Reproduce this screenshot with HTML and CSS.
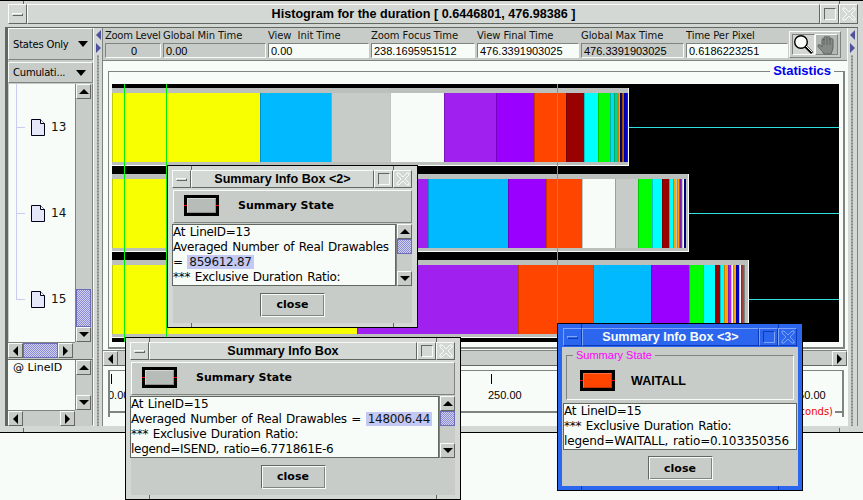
FILE: index.html
```html
<!DOCTYPE html>
<html lang="en">
<head>
<meta charset="utf-8">
<title>Histogram for the duration</title>
<link rel="stylesheet" href="styles.css">
</head>
<body>
<section class="win main">
  <header class="tb main-tb">
    <div class="tb-btn tb-min"><i></i></div>
    <h1 class="tb-title">Histogram for the duration [ 0.6446801, 476.98386 ]</h1>
    <div class="tb-btn tb-max"><i></i></div>
    <div class="tb-btn tb-close"><svg width="14" height="14" viewBox="0 0 14 14"><path d="M1 1h2l4 4 4-4h2v2l-4 4 4 4v2h-2l-4-4-4 4H1v-2l4-4-4-4z" fill="none" stroke="currentColor"/></svg></div>
  </header>
  <div class="client">
    <aside class="left">
      <div class="combo combo-a"><span>States Only</span><i class="tri dn lg"></i></div>
      <div class="combo combo-b"><span>Cumulati...</span><i class="tri dn lg"></i></div>
      <div class="pane pane-tree">
        <div class="tree">
          <div class="tree-row"><i class="twig"></i><svg class="doc" width="14" height="17" viewBox="0 0 14 17"><path d="M.5.5h9l4 4v12H.5z" fill="#e4e8f8" stroke="#000018"/><path d="M9.5.5v4h4" fill="#fff" stroke="#000018"/></svg><span>13</span></div>
          <div class="tree-row"><i class="twig"></i><svg class="doc" width="14" height="17" viewBox="0 0 14 17"><path d="M.5.5h9l4 4v12H.5z" fill="#e4e8f8" stroke="#000018"/><path d="M9.5.5v4h4" fill="#fff" stroke="#000018"/></svg><span>14</span></div>
          <div class="tree-row"><i class="twig"></i><svg class="doc" width="14" height="17" viewBox="0 0 14 17"><path d="M.5.5h9l4 4v12H.5z" fill="#e4e8f8" stroke="#000018"/><path d="M9.5.5v4h4" fill="#fff" stroke="#000018"/></svg><span>15</span></div>
        </div>
        <div class="vsb">
          <div class="sb-btn"><i class="tri up"></i></div>
          <div class="track"></div>
          <div class="thumb thumb-tree"></div>
          <div class="sb-btn"><i class="tri dn"></i></div>
        </div>
        <div class="hsb">
          <div class="sb-btn"><i class="tri lf"></i></div>
          <div class="thumb thumb-h"></div>
          <div class="sb-btn"><i class="tri rt"></i></div>
        </div>
        <div class="corner"></div>
      </div>
      <div class="pane pane-list">
        <div class="list">@ LineID</div>
        <div class="vsb">
          <div class="sb-btn"><i class="tri up"></i></div>
          <div class="track"></div>
          <div class="sb-btn"><i class="tri dn"></i></div>
        </div>
        <div class="hsb">
          <div class="sb-btn"><i class="tri lf"></i></div>
          <div class="track"></div>
          <div class="sb-btn"><i class="tri rt"></i></div>
        </div>
        <div class="corner"></div>
      </div>
    </aside>
    <div class="split"><i class="tri lf blue"></i><i class="tri rt blue"></i><div class="dots"></div></div>
    <main class="center">
      <div class="toolbar">
        <div class="fld f1"><label>Zoom Level</label><output class="ro mid">0</output></div>
        <div class="fld f2"><label>Global Min Time</label><output class="ro">0.00</output></div>
        <div class="fld f3"><label>View&nbsp; Init Time</label><output>0.00</output></div>
        <div class="fld f4"><label>Zoom Focus Time</label><output>238.1695951512</output></div>
        <div class="fld f5"><label>View Final Time</label><output>476.3391903025</output></div>
        <div class="fld f6"><label>Global Max Time</label><output class="ro">476.3391903025</output></div>
        <div class="fld f7"><label>Time Per Pixel</label><output>0.6186223251</output></div>
        <div class="modes">
          <div class="mode on"><svg width="21" height="21" viewBox="0 0 21 21"><circle cx="8" cy="8" r="6.3" fill="#f8fcf8" stroke="#000" stroke-width="1.4"/><path d="M12.5 12.5l6.5 6.5" stroke="#000" stroke-width="2.8"/><path d="M13 12l6 6" stroke="#fff"/></svg></div>
          <div class="mode off"><svg width="20" height="20" viewBox="0 0 20 20"><path d="M7 19c-1-3-6-6-6-8s2-2 4 1V5c0-2 2-2 2 0V3c0-2 3-2 3 0v0c0-2 3-2 3 0v2c0-2 3-2 3 0v7c0 3-1 4-2 7z" fill="#868a86" stroke="#606460"/><path d="M7 4v6M10 3v7M13 3v7" stroke="#606460" fill="none"/></svg></div>
        </div>
      </div>
      <fieldset class="stats">
        <legend>Statistics</legend>
        <div class="canvas">
          <div class="row">
            <div class="bar bar-a">
              <div class="seg" style="width:148px;background:#f8ff00"></div>
              <div class="seg" style="width:71px;background:#00b9ff"></div>
              <div class="seg" style="width:59px;background:#c8ccc8"></div>
              <div class="seg" style="width:54px;background:#f8fcf8"></div>
              <div class="seg" style="width:52px;background:#a020f0"></div>
              <div class="seg" style="width:38px;background:#9900ff"></div>
              <div class="seg" style="width:32px;background:#ff4500"></div>
              <div class="seg" style="width:18px;background:#990000"></div>
              <div class="seg" style="width:14px;background:#00ffff"></div>
              <div class="seg" style="width:12px;background:#00ff00"></div>
              <div class="seg" style="width:4px;background:#00e0e0"></div>
              <div class="seg" style="width:4px;background:#00d090"></div>
              <div class="seg" style="width:2px;background:#ffa500"></div>
              <div class="seg" style="width:2px;background:#000080"></div>
              <div class="seg" style="width:2px;background:#c06000"></div>
              <div class="seg" style="width:3px;background:#0000d0"></div>
              <div class="seg" style="width:1px;background:#1040c0"></div>
            </div>
            <div class="tail"><i></i></div>
          </div>
          <div class="row">
            <div class="bar bar-b">
              <div class="seg" style="width:238px;background:#f8ff00"></div>
              <div class="seg" style="width:78px;background:#a020f0"></div>
              <div class="seg" style="width:80px;background:#00b9ff"></div>
              <div class="seg" style="width:38px;background:#9900ff"></div>
              <div class="seg" style="width:36px;background:#ff4500"></div>
              <div class="seg" style="width:33px;background:#f8fcf8"></div>
              <div class="seg" style="width:23px;background:#c8ccc8"></div>
              <div class="seg" style="width:14px;background:#00ff00"></div>
              <div class="seg" style="width:10px;background:#00ffff"></div>
              <div class="seg" style="width:7px;background:#990000"></div>
              <div class="seg" style="width:4px;background:#00ffff"></div>
              <div class="seg" style="width:3px;background:#ffa500"></div>
              <div class="seg" style="width:1px;background:#f8fcf8"></div>
              <div class="seg" style="width:2px;background:#ffa500"></div>
              <div class="seg" style="width:1px;background:#00d090"></div>
              <div class="seg" style="width:2px;background:#a020f0"></div>
              <div class="seg" style="width:2px;background:#f8fcf8"></div>
              <div class="seg" style="width:2px;background:#000090"></div>
            </div>
            <div class="tail"><i></i></div>
          </div>
          <div class="row">
            <div class="bar bar-c">
              <div class="seg" style="width:245px;background:#f8ff00"></div>
              <div class="seg" style="width:161px;background:#a020f0"></div>
              <div class="seg" style="width:75px;background:#ff4500"></div>
              <div class="seg" style="width:58px;background:#00b9ff"></div>
              <div class="seg" style="width:38px;background:#9900ff"></div>
              <div class="seg" style="width:14px;background:#00ff00"></div>
              <div class="seg" style="width:12px;background:#00ffff"></div>
              <div class="seg" style="width:5px;background:#990000"></div>
              <div class="seg" style="width:4px;background:#00ffff"></div>
              <div class="seg" style="width:4px;background:#ffa500"></div>
              <div class="seg" style="width:3px;background:#a020f0"></div>
              <div class="seg" style="width:2px;background:#f8fcf8"></div>
              <div class="seg" style="width:3px;background:#ffa500"></div>
              <div class="seg" style="width:3px;background:#0000d0"></div>
              <div class="seg" style="width:2px;background:#f8fcf8"></div>
              <div class="seg" style="width:2px;background:#a04040"></div>
              <div class="seg" style="width:2px;background:#808480"></div>
            </div>
            <div class="tail"><i></i></div>
          </div>
          <i class="vline v1"></i><i class="vline v2"></i><i class="vline v3"></i>
        </div>
      </fieldset>
      <div class="hsb canvas-sb">
        <div class="sb-btn"><i class="tri lf"></i></div>
        <div class="track"></div>
        <div class="sb-btn"><i class="tri rt"></i></div>
      </div>
      <div class="axis">
        <div class="ticks">
          <div class="tick"><i></i><span>0.00</span></div>
          <div class="tick"><i></i></div>
          <div class="tick"><i></i></div>
          <div class="tick"><i></i></div>
          <div class="tick"><i></i></div>
          <div class="tick"><i></i><span>250.00</span></div>
          <div class="tick"><i></i></div>
          <div class="tick"><i></i></div>
          <div class="tick"><i></i></div>
          <div class="tick"><i></i><span>450.00</span></div>
        </div>
        <div class="axis-foot"><i class="rule"></i><span>(Seconds)</span><i class="rule short"></i></div>
      </div>
    </main>
    <div class="split split-r"><i class="tri lf blue"></i><i class="tri rt blue"></i><div class="dots"></div></div>
  </div>
</section>

<section class="win box box-1">
  <header class="tb">
    <div class="tb-btn tb-min"><i></i></div>
    <h2 class="tb-title">Summary Info Box</h2>
    <div class="tb-btn tb-max"><i></i></div>
    <div class="tb-btn tb-close"><svg width="14" height="14" viewBox="0 0 14 14"><path d="M1 1h2l4 4 4-4h2v2l-4 4 4 4v2h-2l-4-4-4 4H1v-2l4-4-4-4z" fill="none" stroke="currentColor"/></svg></div>
  </header>
  <div class="box-body">
    <div class="state"><div class="swatch"><i></i></div><b>Summary State</b></div>
    <div class="textrow">
      <div class="text">
        <p>At LineID=15</p>
        <p>Averaged Number of Real Drawables = <mark>148006.44</mark></p>
        <p>*** Exclusive Duration Ratio:</p>
        <p>legend=ISEND, ratio=6.771861E-6</p>
      </div>
      <div class="vsb">
        <div class="sb-btn"><i class="tri up"></i></div>
        <div class="thumb thumb-box"></div>
        <div class="track"></div>
        <div class="sb-btn"><i class="tri dn"></i></div>
      </div>
    </div>
    <div class="foot"><div class="close">close</div></div>
  </div>
</section>

<section class="win box box-2">
  <header class="tb">
    <div class="tb-btn tb-min"><i></i></div>
    <h2 class="tb-title">Summary Info Box &lt;2&gt;</h2>
    <div class="tb-btn tb-max"><i></i></div>
    <div class="tb-btn tb-close"><svg width="14" height="14" viewBox="0 0 14 14"><path d="M1 1h2l4 4 4-4h2v2l-4 4 4 4v2h-2l-4-4-4 4H1v-2l4-4-4-4z" fill="none" stroke="currentColor"/></svg></div>
  </header>
  <div class="box-body">
    <div class="state"><div class="swatch"><i></i></div><b>Summary State</b></div>
    <div class="textrow">
      <div class="text">
        <p>At LineID=13</p>
        <p>Averaged Number of Real Drawables</p>
        <p>= <mark>859612.87</mark></p>
        <p>*** Exclusive Duration Ratio:</p>
      </div>
      <div class="vsb">
        <div class="sb-btn"><i class="tri up"></i></div>
        <div class="thumb thumb-box"></div>
        <div class="track"></div>
        <div class="sb-btn"><i class="tri dn"></i></div>
      </div>
    </div>
    <div class="foot"><div class="close">close</div></div>
  </div>
</section>

<section class="win box box-3">
  <header class="tb">
    <div class="tb-btn tb-min"><i></i></div>
    <h2 class="tb-title">Summary Info Box &lt;3&gt;</h2>
    <div class="tb-btn tb-max"><i></i></div>
    <div class="tb-btn tb-close"><svg width="14" height="14" viewBox="0 0 14 14"><path d="M1 1h2l4 4 4-4h2v2l-4 4 4 4v2h-2l-4-4-4 4H1v-2l4-4-4-4z" fill="none" stroke="currentColor"/></svg></div>
  </header>
  <div class="box-body">
    <fieldset class="state-group">
      <legend>Summary State</legend>
      <div class="swatch swatch-wait"><i></i></div><b>WAITALL</b>
    </fieldset>
    <div class="text text-3">
      <p>At LineID=15</p>
      <p>*** Exclusive Duration Ratio:</p>
      <p class="wide">legend=WAITALL, ratio=0.103350356</p>
    </div>
    <div class="foot"><div class="close">close</div></div>
  </div>
</section>
</body>
</html>
```
FILE: styles.css
```css
* { box-sizing: border-box; }
html, body { margin: 0; height: 500px; overflow: hidden; }
body {
  position: relative;
  background: #f8fcf8;
  color: #000;
  font: 11px "DejaVu Sans", sans-serif;
}
i { display: block; }
p { margin: 0; }

/* window chrome */
.win {
  --frame: #d4d8d4;
  --hi: #f8fcf8;
  --lo: #606860;
  position: absolute;
  display: flex;
  flex-direction: column;
  border: 1px solid #000;
  background:
    linear-gradient(var(--lo), var(--lo)) 23px 0 / 1px 4px no-repeat,
    linear-gradient(var(--lo), var(--lo)) calc(100% - 23px) 0 / 1px 4px no-repeat,
    linear-gradient(var(--lo), var(--lo)) 23px 100% / 1px 4px no-repeat,
    linear-gradient(var(--lo), var(--lo)) calc(100% - 23px) 100% / 1px 4px no-repeat,
    var(--frame);
  padding: 4px;
}
.main { left: 0; top: 0; width: 863px; height: 433px; padding: 3px 5px 6px 5px; border-width: 1px 0 1px 0; }
.box-1 { left: 125px; top: 337px; width: 336px; height: 163px; }
.box-2 { left: 167px; top: 165px; width: 251px; height: 163px; }
.box-3 {
  --frame: #2c66ee;
  --hi: #7ea4f8;
  --lo: #0c3ab8;
  left: 557px; top: 323px; width: 246px; height: 168px;
}
.tb { display: flex; height: 18px; flex: none; color: #000; }
.box .tb { margin-right: 1px; }
.box-3 .tb { margin-left: 1px; color: #f8fcf8; }
.main-tb { height: 20px; margin-left: 3px; }
.tb-btn {
  flex: none;
  width: 19px;
  display: flex;
  align-items: center;
  justify-content: center;
  border: 1px solid;
  border-color: var(--hi) var(--lo) var(--lo) var(--hi);
}
.tb-min i { width: 11px; height: 3px; background: var(--frame); border: 1px solid var(--hi); border-bottom-color: var(--lo); border-right-color: var(--lo); }
.tb-max i { width: 12px; height: 12px; border: 1px solid; border-color: var(--lo) var(--hi) var(--hi) var(--lo); }
.tb-close { color: var(--hi); }
.tb-title {
  flex: 1;
  margin: 0;
  text-align: center;
  font: bold 12.6px/16px "Liberation Sans", sans-serif;
  border: 1px solid;
  border-color: var(--hi) var(--lo) var(--lo) var(--hi);
  white-space: nowrap;
  overflow: hidden;
}
.main-tb .tb-title { line-height: 18px; }

/* main layout */
.client {
  flex: 1;
  min-height: 0;
  display: flex;
  margin-top: 3px;
  background: #c8ccc8;
  border-left: 3px solid var(--lo);
  border-top: 1px solid var(--lo);
}
.left { width: 85px; flex: none; display: flex; flex-direction: column; }
.combo {
  display: flex;
  align-items: center;
  justify-content: space-between;
  border: 1px solid;
  border-color: #f8fcf8 #808480 #808480 #f8fcf8;
  font-size: 10px;
  letter-spacing: -.2px;
  padding: 0 4px 0 4px;
}
.combo-a { height: 32px; margin-bottom: 2px; }
.combo-b { height: 21px; margin-bottom: 1px; padding-right: 6px; }
.pane { display: grid; grid-template-columns: 67px 16px; background: #c8ccc8; border-right: 1px solid #808480; }
.pane-tree { grid-template-rows: 258px 16px; height: 274px; margin-bottom: 1px; }
.pane-list { grid-template-rows: 50px 16px; height: 66px; border-top: 1px solid #606860; }
.corner { background: #c8ccc8; }
.tree {
  overflow: hidden;
  border-left: 1px solid #c8ccc8;
  background: linear-gradient(#c8ccf0, #c8ccf0) 7px 0 / 1px 215px no-repeat, #f8fcf8;
}
.tree-row { height: 86px; display: flex; align-items: center; gap: 6px; padding-left: 7px; font-size: 12px; color: #101410; }
.twig { width: 9px; height: 1px; background: #c8ccf0; }
.doc { flex: none; }
.list { background: #f8fcf8; padding: 1px 5px; font-size: 11px; }

/* scrollbars */
.vsb { display: flex; flex-direction: column; background: #c8ccc8; border-left: 1px solid #808480; }
.hsb { display: flex; background: #c8ccc8; border-top: 1px solid #808480; }
.track { flex: 1; background: #c8ccc8; }
.sb-btn {
  flex: none;
  width: 15px;
  height: 15px;
  display: flex;
  align-items: center;
  justify-content: center;
  background: #c8ccc8;
  border: 1px solid;
  border-color: #f8fcf8 #606860 #606860 #f8fcf8;
}
.thumb {
  flex: none;
  border: 1px solid #6c6cb8;
  background: repeating-conic-gradient(#d0d0f0 0 25%, #8c8cd4 0 50%) 0 0 / 2px 2px;
}
.thumb-tree { height: 38px; width: 15px; }
.thumb-h { width: 35px; height: 15px; }
.thumb-box { width: 15px; height: 15px; }
.tri { width: 0; height: 0; flex: none; border-style: solid; border-color: transparent; }
.tri.up { border-width: 0 5px 5px; border-bottom-color: #000; }
.tri.dn { border-width: 5px 5px 0; border-top-color: #000; }
.tri.lf { border-width: 5px 5px 5px 0; border-right-color: #000; }
.tri.rt { border-width: 5px 0 5px 5px; border-left-color: #000; }
.tri.lg { border-width: 6px 5px 0; }
.tri.lf.blue { border-right-color: #50509c; }
.tri.rt.blue { border-left-color: #50509c; margin-top: 3px; }

/* splitters */
.split { width: 10px; flex: none; display: flex; flex-direction: column; align-items: center; padding-top: 2px; background: #d4d8d4; border-left: 1px solid #f8fcf8; border-right: 1px solid #808480; }
.split-r { width: 11px; }
.dots { flex: 1; width: 5px; margin-top: 2px; background: radial-gradient(circle, #868a86 1px, transparent 1.3px) 0 0 / 4px 3px; }

/* centre */
.center { flex: 1; min-width: 0; background: #f8fcf8; display: flex; flex-direction: column; }
.toolbar { height: 33px; flex: none; display: flex; background: #c8ccc8; padding: 1px 0 2px 2px; gap: 2px; border-bottom: 1px solid #808480; }
.fld { flex: none; display: flex; flex-direction: column; font-size: 10px; }
.fld label { height: 14px; line-height: 13px; white-space: nowrap; color: #101410; letter-spacing: -.08px; }
.f1 label { letter-spacing: -.3px; }
.fld output {
  height: 16px; padding-left: 2px;
  font: 11px/14px "Liberation Sans", sans-serif;
  background: #f8fcf8; border: 1px solid #808480; border-right-color: #f8fcf8; border-bottom-color: #f8fcf8;
  white-space: nowrap; overflow: hidden;
}
.fld output.ro { background: #c8ccc8; }
.fld output.mid { text-align: center; }
.f1 { width: 56px; } .f2 { width: 103px; } .f3 { width: 101px; } .f4 { width: 104px; } .f5 { width: 102px; } .f6 { width: 103px; } .f7 { width: 102px; }
.modes { display: flex; margin: 2px 0 0 -1px; padding: 2px; border: 1px solid; border-color: #f8fcf8 #808480 #808480 #f8fcf8; height: 27px; width: 52px; }
.mode { flex: 1; display: flex; align-items: center; justify-content: center; border: 1px solid; }
.mode.on { background: #d4d8d4; border-color: #808480 #f8fcf8 #f8fcf8 #808480; }
.mode.off { background: #b4b8b4; border-color: #f8fcf8 #808480 #808480 #f8fcf8; }

.stats {
  flex: none;
  margin: 3px 2px 0 5px;
  padding: 6px 4px 4px 3px;
  border: 1px solid #808480;
  border-width: 1px 2px 2px 1px;
  min-width: 0;
  height: 285px;
}
.stats legend {
  margin-left: auto;
  margin-right: 5px;
  padding: 0 3px;
  color: #0000f0;
  font: bold 13px/14px "Liberation Sans", sans-serif;
}
.canvas { position: relative; height: 258px; background: #000; padding-top: 4px; display: flex; flex-direction: column; gap: 8px; overflow: hidden; }
.row { display: flex; height: 78px; flex: none; }
.bar {
  flex: none;
  display: flex;
  border: solid #f8fcf8;
  border-width: 0 1px 1px 0;
  background: #bcc0bc;
  padding: 5px 0 3px;
}
.bar-a { width: 517px; } .bar-b { width: 577px; } .bar-c { width: 637px; }
.seg { flex: none; box-shadow: inset 1px 0 rgba(0,0,0,.22); }
.tail { flex: 1; display: flex; align-items: center; }
.tail i { width: 100%; height: 1px; background: #30e0e0; }
.vline { position: absolute; top: 0; bottom: 0; width: 1px; background: #00f000; }
.v1 { left: 12px; } .v2 { left: 54px; } .v3 { left: 445px; background: #40c840; }

.canvas-sb { flex: none; height: 16px; margin-top: 1px; border-bottom: 1px solid #606860; background: #c8ccc8; }
.axis {
  flex: 1;
  margin: 4px 3px 9px 5px;
  border: solid #808480;
  border-width: 1px 2px 0 2px;
  display: flex;
  flex-direction: column;
  overflow: hidden;
}
.ticks { flex: 1; display: flex; padding: 3px 0 0 1px; }
.tick { flex: none; width: 76px; font: 11px "Liberation Sans", sans-serif; }
.tick i { width: 1px; height: 10px; background: #000; }
.tick span { display: block; margin: 5px 0 0 -3px; }
.axis-foot { display: flex; align-items: center; gap: 2px; height: 11px; }
.axis-foot span { color: #f00000; font-size: 10px; line-height: 11px; }
.rule { flex: 1; border-top: 2px solid #808480; }
.rule.short { flex: none; width: 7px; }

/* info boxes */
.box-body { flex: 1; min-height: 0; display: flex; flex-direction: column; background: #c8ccc8; margin: 2px 1px 0; }
.box-3 .box-body { margin: 1px 0 0; }
.state { height: 33px; flex: none; display: flex; align-items: center; gap: 19px; padding: 0 0 2px 10px; border: 1px solid; border-color: #f8fcf8 #808480 #808480 #f8fcf8; }
.state b { font-size: 11px; }
.swatch { width: 35px; height: 21px; flex: none; padding: 3px; background:
  linear-gradient(#f00, #f00) left center / 3px 1px no-repeat,
  linear-gradient(#f00, #f00) right center / 3px 1px no-repeat,
  #000; }
.swatch i { width: 100%; height: 100%; background: #b8bcb8; border: 1px solid; border-color: #d4d8d4 #909490 #909490 #d4d8d4; }
.textrow { display: flex; height: 62px; margin: 1px 0 0 -1px; flex: none; }
.text {
  flex: 1;
  min-width: 0;
  background: #f8fcf8;
  border: 1px solid #606860;
  font-size: 12px;
  line-height: 15px;
  letter-spacing: -.28px;
  word-spacing: 1px;
  white-space: nowrap;
  overflow: hidden;
}
.text mark { background: #c4c8f4; color: #101410; padding: 0 2px; }
.textrow .vsb { flex: none; width: 16px; }
.foot { flex: 1; display: flex; align-items: center; justify-content: center; }
.close {
  width: 65px; height: 24px;
  display: flex; align-items: center; justify-content: center;
  font: bold 11px "DejaVu Sans", sans-serif;
  border: 1px solid;
  border-color: #606860 #f8fcf8 #f8fcf8 #606860;
  box-shadow: inset 1px 1px #f8fcf8, inset -1px -1px #808480;
}
.state-group {
  flex: none;
  display: flex;
  align-items: center;
  gap: 16px;
  margin: 2px 4px 0;
  height: 51px;
  padding: 9px 0 0 13px;
  border: 1px solid #808480;
  border-bottom-color: #f8fcf8;
  border-right-color: #f8fcf8;
  min-width: 0;
}
.state-group legend { margin-left: -7px; padding: 0 3px; color: #ff00ff; font: 11px/12px "Liberation Sans", sans-serif; }
.state-group b { font: bold 12.6px "Liberation Sans", sans-serif; }
.swatch-wait i { background: #ff4500; border-color: #ff7040 #c03400 #c03400 #ff7040; }
.text-3 { flex: none; height: 47px; margin: 3px 1px 0; }
.text .wide { letter-spacing: -.1px; }
```
